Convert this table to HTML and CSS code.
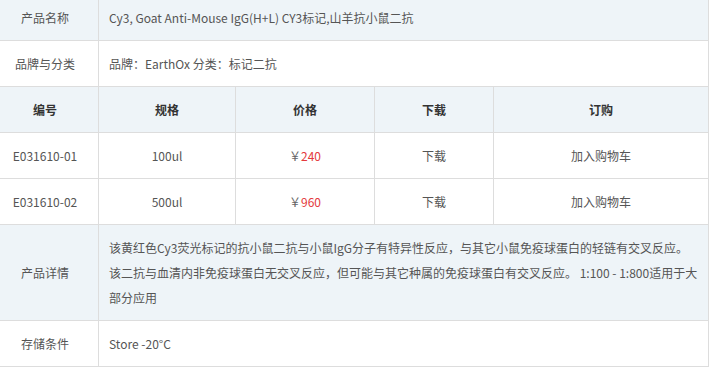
FILE: index.html
```html
<!DOCTYPE html>
<html lang="zh-CN">
<head>
<meta charset="utf-8">
<title>产品信息</title>
<link rel="stylesheet" href="styles.css">
</head>
<body>
<div class="spec">
  <div class="cell label blue">产品名称</div>
  <div class="cell value blue span4">Cy3, Goat Anti-Mouse IgG(H+L) CY3标记,山羊抗小鼠二抗</div>

  <div class="cell label">品牌与分类</div>
  <div class="cell value span4">品牌：EarthOx 分类：标记二抗</div>

  <div class="cell head blue">编号</div>
  <div class="cell head blue">规格</div>
  <div class="cell head blue">价格</div>
  <div class="cell head blue">下载</div>
  <div class="cell head blue">订购</div>

  <div class="cell label">E031610-01</div>
  <div class="cell center">100ul</div>
  <div class="cell center"><span class="yen">￥</span><span class="price">240</span></div>
  <div class="cell center">下载</div>
  <div class="cell center">加入购物车</div>

  <div class="cell label">E031610-02</div>
  <div class="cell center">500ul</div>
  <div class="cell center"><span class="yen">￥</span><span class="price">960</span></div>
  <div class="cell center">下载</div>
  <div class="cell center">加入购物车</div>

  <div class="cell label blue">产品详情</div>
  <div class="cell value detail blue span4">该黄红色Cy3荧光标记的抗小鼠二抗与小鼠IgG分子有特异性反应，与其它小鼠免疫球蛋白的轻链有交叉反应。<br>该二抗与血清内非免疫球蛋白无交叉反应，但可能与其它种属的免疫球蛋白有交叉反应。 1:100 - 1:800适用于大<br>部分应用</div>

  <div class="cell label">存储条件</div>
  <div class="cell value span4">Store -20°C</div>
</div>
</body>
</html>
```

FILE: styles.css
```css
html, body {
  margin: 0;
  padding: 0;
  background: #ffffff;
}

body {
  font-family: "Noto Sans CJK SC", "Noto Sans", sans-serif;
  font-size: 12px;
  color: #555555;
}

.spec {
  width: 718px;
  box-sizing: border-box;
  margin: -6px 0 0 -9px;
  padding: 1px;
  background: #dddddd;
  display: grid;
  grid-template-columns: 106px 136px 138px 118px 214px;
  grid-template-rows: 45px 45px 45px 45px 45px 95px 45px;
  gap: 1px;
}

.cell {
  background: #ffffff;
  display: flex;
  align-items: center;
  line-height: 20px;
  white-space: nowrap;
}

.blue {
  background: #eef4f8;
}

.label,
.center,
.head {
  justify-content: center;
}

.head {
  font-weight: 700;
  color: #333333;
}

.value {
  padding: 0 10px;
}

.span4 {
  grid-column: span 4;
}

.detail {
  display: block;
  padding-top: 10px;
  padding-bottom: 10px;
  line-height: 25px;
  white-space: normal;
}

.yen {
  color: #666666;
}

.price {
  color: #e4393c;
}
```
